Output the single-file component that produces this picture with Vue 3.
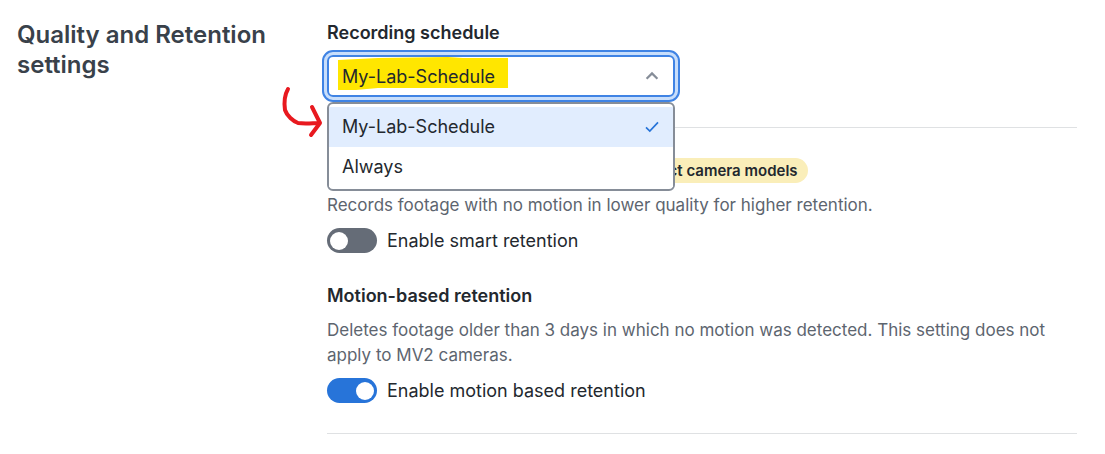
<script setup>
import { ref } from 'vue'

const schedules = ['My-Lab-Schedule', 'Always']
const schedule = ref(schedules[0])
const smart = ref(false)
const motion = ref(true)
</script>

<template>
  <main class="settings">
    <h1 class="page-title">Quality and Retention settings</h1>

    <div class="content">
      <section class="group">
        <label class="title" for="schedule">Recording schedule</label>
        <div class="picker">
          <svg class="marker" width="170" height="34" viewBox="0 0 170 34" aria-hidden="true">
            <path d="M0 3 L40 1 L110 0 L125 1 L170 1 V31 L90 31 L40 31 L18 33 L0 33 Z" fill="#ffe600" />
          </svg>
          <select id="schedule" v-model="schedule" class="select">
            <option v-for="s in schedules" :key="s" :value="s">{{ s }}</option>
          </select>
          <svg class="chevron" width="14" height="10" viewBox="0 0 14 10" aria-hidden="true">
            <path d="M1.6 7.8 L7 2.4 L12.4 7.8" fill="none" stroke="#868d98" stroke-width="2.2" />
          </svg>
          <div class="menu" role="listbox" aria-label="Recording schedule">
            <button
              v-for="s in schedules"
              :key="s"
              type="button"
              role="option"
              class="option"
              :class="{ selected: s === schedule }"
              :aria-selected="s === schedule"
              @click="schedule = s"
            >
              <span>{{ s }}</span>
              <svg v-if="s === schedule" width="14" height="12" viewBox="0 0 14 12" aria-hidden="true">
                <path d="M1 6.4 L4.8 10 L13 1.4" fill="none" stroke="#2774d9" stroke-width="1.7" />
              </svg>
            </button>
          </div>
          <svg class="arrow" width="42" height="54" viewBox="0 0 42 54" aria-hidden="true">
            <path
              d="M7 4 C3 11 3 18 4 25 C6 31 12 36 17 38 C25 39 32 38 38 38 M31 22 L39 38 L30 50"
              fill="none"
              stroke="#e8191f"
              stroke-width="4"
              stroke-linecap="round"
              stroke-linejoin="round"
            />
          </svg>
        </div>
      </section>

      <section class="group">
        <div class="title-row">
          <h2 class="title">Smart retention</h2>
          <span class="badge">Only compatible with select camera models</span>
        </div>
        <p class="description">Records footage with no motion in lower quality for higher retention.</p>
        <label class="toggle">
          <input v-model="smart" type="checkbox" role="switch" class="switch" />
          <span>Enable smart retention</span>
        </label>

        <h2 class="title next">Motion-based retention</h2>
        <p class="description">
          Deletes footage older than 3 days in which no motion was detected. This setting does not
          apply to MV2 cameras.
        </p>
        <label class="toggle">
          <input v-model="motion" type="checkbox" role="switch" class="switch" />
          <span>Enable motion based retention</span>
        </label>
      </section>
    </div>
  </main>
</template>

<style>
body {
  margin: 0;
  background: #fff;
}
</style>

<style scoped>
.settings {
  display: grid;
  grid-template-columns: 260px minmax(0, 1fr);
  column-gap: 50px;
  padding: 20px 28px 20px 17px;
  font: 400 18px/25px Inter, "Liberation Sans", sans-serif;
  color: #23282e;
}
h1,
h2,
p {
  margin: 0;
}
.page-title {
  font-size: 24px;
  line-height: 30px;
  font-weight: 600;
  color: #39414a;
}
.group {
  display: flex;
  flex-direction: column;
  align-items: flex-start;
  gap: 10px;
  padding-bottom: 30px;
  border-bottom: 1px solid #dfe1e3;
}
.group + .group {
  padding-top: 30px;
}
.title {
  font-size: 18px;
  line-height: 25px;
  font-weight: 600;
}
.next {
  margin-top: 20px;
}
.title-row {
  display: flex;
  align-items: center;
  gap: 10px;
}
.badge {
  padding: 0 10px;
  border-radius: 13px;
  background: #faeeb9;
  font-size: 15px;
  font-weight: 600;
  white-space: nowrap;
}
.description {
  font-size: 17px;
  color: #5d656f;
}
.picker {
  position: relative;
  z-index: 1;
  width: 348px;
  max-width: 100%;
}
.select {
  position: relative;
  display: block;
  box-sizing: border-box;
  width: 100%;
  height: 42px;
  margin: 0;
  padding: 0 40px 0 13px;
  appearance: none;
  border: 2px solid #3f83e4;
  border-radius: 6px;
  outline: 2px solid #3f83e4;
  outline-offset: 3px;
  box-shadow: 0 0 0 4px #c8defb;
  background: transparent;
  color: inherit;
  font: inherit;
}
.marker {
  position: absolute;
  left: 11px;
  top: 2px;
}
.chevron {
  position: absolute;
  right: 16px;
  top: 16px;
  pointer-events: none;
}
.arrow {
  position: absolute;
  left: -46px;
  top: 30px;
  pointer-events: none;
}
.menu {
  position: absolute;
  top: 47px;
  left: 0;
  right: 0;
  padding: 3px 0 2px;
  border: 2px solid #868d98;
  border-radius: 6px;
  background: #fff;
}
.option {
  display: flex;
  align-items: center;
  justify-content: space-between;
  width: 100%;
  padding: 7px 14px 8px 13px;
  border: 0;
  background: #fff;
  color: inherit;
  font: inherit;
  text-align: left;
}
.option.selected {
  background: #e1edfe;
}
.toggle {
  display: flex;
  align-items: center;
  gap: 10px;
}
.switch {
  flex: none;
  display: flex;
  align-items: center;
  box-sizing: border-box;
  width: 50px;
  height: 25px;
  margin: 0;
  padding: 0 3px;
  appearance: none;
  border-radius: 13px;
  background: #656c77;
}
.switch::before {
  content: "";
  width: 18px;
  height: 18px;
  border-radius: 50%;
  background: #fff;
}
.switch:checked {
  justify-content: flex-end;
  background: #2774d9;
}
</style>
